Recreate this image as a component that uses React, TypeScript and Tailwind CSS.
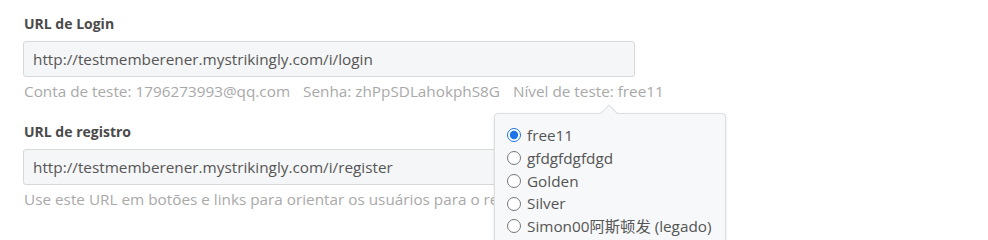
import React from 'react';

const levels = ['free11', 'gfdgfdgfdgd', 'Golden', 'Silver', 'Simon00阿斯顿发 (legado)'];

function Field({ label, value, clip, children }: { label: string; value: string; clip?: boolean; children: React.ReactNode }) {
  return (
    <div className="mb-[21px]">
      <div className="text-[14px] leading-[20px] font-bold text-[#4a4a4a] pl-px mb-[7px]">{label}</div>
      <div className="w-[612px] h-[36px] flex items-center px-[9px] bg-[#f5f6f7] border border-[#d6d8da] rounded-[3px] text-[15.3px] text-[#555]">
        {value}
      </div>
      <div className={clip ? 'mt-[4px] w-[471px] overflow-hidden whitespace-nowrap text-[15.3px] leading-[20px] text-[#a9a9a9] pl-px' : 'mt-[4px] whitespace-nowrap text-[15.3px] leading-[20px] text-[#a9a9a9] pl-px'}>
        {children}
      </div>
    </div>
  );
}

export default function App() {
  return (
    <div
      className="relative w-[988px] h-[240px] overflow-hidden bg-white"
      style={{ fontFamily: '"Open Sans", "Noto Sans CJK SC", sans-serif' }}
    >
      <div className="pl-[23px] pt-[14px]">
        <Field label="URL de Login" value="http://testmemberener.mystrikingly.com/i/login">
          <span className="mr-[13px]">Conta de teste: 1796273993@qq.com</span>
          <span className="mr-[13px]">Senha: zhPpSDLahokphS8G</span>
          <span>Nível de teste: free11</span>
        </Field>
        <Field label="URL de registro" value="http://testmemberener.mystrikingly.com/i/register" clip>
          Use este URL em botões e links para orientar os usuários para o registro.
        </Field>
      </div>

      {/* Level popover */}
      <div className="absolute left-[494px] top-[113px] w-[232px] h-[140px] bg-[#f7f8f9] border border-[#dcdee0] rounded-[4px] shadow-sm pl-[12px] pt-[10px]">
        <div className="absolute -top-[7px] left-[108px] w-[12px] h-[12px] rotate-45 bg-[#f7f8f9] border-l border-t border-[#dcdee0]" />
        {levels.map((lv, i) => (
          <label key={lv} className="flex items-center text-[15.3px] leading-[22.75px] text-[#555]">
            <input type="radio" name="level" defaultChecked={i === 0} className="w-[14px] h-[14px] mr-[6px] m-0 accent-[#1a73e8]" />
            {lv}
          </label>
        ))}
      </div>
    </div>
  );
}
